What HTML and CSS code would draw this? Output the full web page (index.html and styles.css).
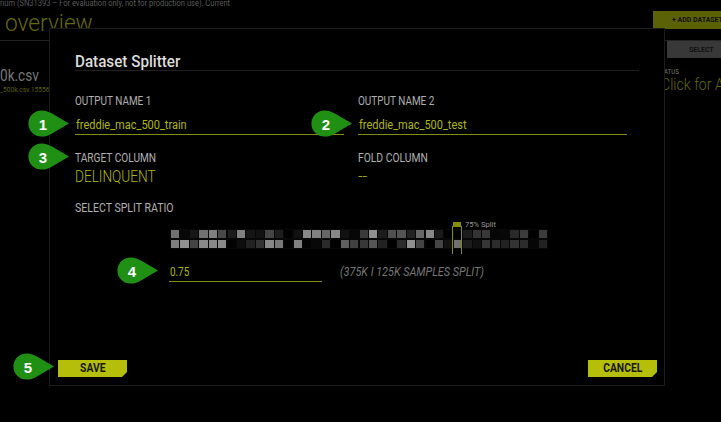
FILE: index.html
```html
<!DOCTYPE html>
<html lang="en">
<head>
<meta charset="utf-8">
<title>Dataset Splitter</title>
<link rel="stylesheet" href="styles.css">
</head>
<body>
<div class="page">
  <div class="notice"><span class="t">rium (SN31393 – For evaluation only, not for production use). Current</span></div>
  <header class="topbar">
    <h1><span class="t">overview</span></h1>
    <div class="add"><span class="t">+ ADD DATASET</span></div>
  </header>
  <main class="dataset">
    <div class="file">
      <div class="file-name"><span class="t">0k.csv</span></div>
      <div class="file-id"><span class="t">_500k.csv.15556</span></div>
    </div>
    <div class="side">
      <div class="select"><span class="t">SELECT</span></div>
      <div class="status-label"><span class="t">ATUS</span></div>
      <div class="status"><span class="t">Click for A</span></div>
    </div>
  </main>
</div>

<section class="modal">
  <h2><span class="t">Dataset Splitter</span></h2>
  <div class="fields">
    <div class="field">
      <div class="label"><span class="t l-name">OUTPUT NAME 1</span></div>
      <div class="input"><span class="t i-train">freddie_mac_500_train</span></div>
    </div>
    <div class="field">
      <div class="label"><span class="t l-name">OUTPUT NAME 2</span></div>
      <div class="input"><span class="t i-test">freddie_mac_500_test</span></div>
    </div>
    <div class="field">
      <div class="label"><span class="t l-target">TARGET COLUMN</span></div>
      <div class="value"><span class="t v-target">DELINQUENT</span></div>
    </div>
    <div class="field">
      <div class="label"><span class="t l-fold">FOLD COLUMN</span></div>
      <div class="value"><span class="t v-fold">--</span></div>
    </div>
  </div>
  <div class="label ratio"><span class="t l-ratio">SELECT SPLIT RATIO</span></div>
  <div class="strip">
    <div class="cells" id="cells"></div>
    <div class="handle"></div>
    <div class="split"><span class="t">75% Split</span></div>
  </div>
  <div class="amount">
    <div class="input number"><span class="t i-num">0.75</span></div>
    <div class="samples"><span class="t">(375K I 125K SAMPLES SPLIT)</span></div>
  </div>
  <footer>
    <button><span class="t b-save">SAVE</span></button>
    <button><span class="t b-cancel">CANCEL</span></button>
  </footer>
</section>

<div class="pin p1"><svg viewBox="0 0 42 27"><path d="M13.500 .4C18 .4 21 1.800 24 3.600L41 13.500L24 23.400C21 25.200 18 26.600 13.500 26.600A13.100 13.100 0 0 1 13.500 .4Z"/></svg><b>1</b></div>
<div class="pin p2"><svg viewBox="0 0 42 27"><path d="M13.500 .4C18 .4 21 1.800 24 3.600L41 13.500L24 23.400C21 25.200 18 26.600 13.500 26.600A13.100 13.100 0 0 1 13.500 .4Z"/></svg><b>2</b></div>
<div class="pin p3"><svg viewBox="0 0 42 27"><path d="M13.500 .4C18 .4 21 1.800 24 3.600L41 13.500L24 23.400C21 25.200 18 26.600 13.500 26.600A13.100 13.100 0 0 1 13.500 .4Z"/></svg><b>3</b></div>
<div class="pin p4"><svg viewBox="0 0 42 27"><path d="M13.500 .4C18 .4 21 1.800 24 3.600L41 13.500L24 23.400C21 25.200 18 26.600 13.500 26.600A13.100 13.100 0 0 1 13.500 .4Z"/></svg><b>4</b></div>
<div class="pin p5"><svg viewBox="0 0 42 27"><path d="M13.500 .4C18 .4 21 1.800 24 3.600L41 13.500L24 23.400C21 25.200 18 26.600 13.500 26.600A13.100 13.100 0 0 1 13.500 .4Z"/></svg><b>5</b></div>
<script src="cells.js"></script>
</body>
</html>
```
FILE: cells.js
```js
// Brightness of each sample cell, one hex pair per cell, two rows of 40.
const rows = [
  "70 08 16 70 80 48 1c 80 15 11 44 1e 00 11 88 80 66 88 11 06 3a 90 1c 50 55 22 66 88 1a 00 00 1c 33 38 06 08 2a 3c 00 3c",
  "80 90 44 88 88 8c 03 0d 22 33 88 77 00 80 02 08 2a 00 60 40 38 55 22 00 2c 90 44 00 44 11 70 1c 11 36 2c 22 33 2c 06 22"
];
const box = document.getElementById("cells");
rows.join(" ").split(" ").forEach(function (v) {
  const cell = document.createElement("i");
  cell.style.background = "#" + v + v + v;
  box.appendChild(cell);
});
```
FILE: styles.css
```css
* { box-sizing: border-box; }
html, body { margin: 0; height: 100%; overflow: hidden; background: #000; }
body { font-family: Roboto, "Liberation Sans", sans-serif; position: relative; }
h1, h2 { margin: 0; font-weight: 400; }
.t { display: inline-block; white-space: pre; transform-origin: 0 50%; }

.page { display: flow-root; height: 422px; overflow: hidden; }
.notice { height: 11px; font-size: 9px; line-height: 12px; margin-top: -3px; color: #5a5a5a; }
.notice .t { transform: scaleX(.835); }
.topbar { display: flex; justify-content: space-between; height: 33px; border-bottom: 1px solid #242424; padding-top: 3px; }
.topbar h1 { padding-left: 5px; font-size: 24px; line-height: 24px; font-weight: 300; color: #656a08; }
.topbar h1 .t { transform: scaleX(.945); }
.add { width: 68px; height: 18px; background: #5b6106; color: #111; font-size: 8px; font-weight: 700; line-height: 18px; padding-left: 19px; overflow: hidden; white-space: nowrap; }
.add .t { transform: scaleX(.87); }
.dataset { display: flex; justify-content: space-between; }
.file { padding-top: 25px; }
.file-name { font-size: 16px; line-height: 20px; color: #777; }
.file-name .t { transform: scaleX(.85); }
.file-id { font-size: 8px; line-height: 7px; color: #5c600a; }
.file-id .t { transform: scaleX(.83); }
.side { width: 60px; }
.select { margin-left: 6px; height: 17px; background: #383838; color: #111; font-size: 8px; font-weight: 700; line-height: 17px; padding-left: 22px; }
.select .t { transform: scaleX(.87); }
.status-label { margin-top: 9px; padding-left: 3px; font-size: 8px; line-height: 9px; color: #777; }
.status-label .t { transform: scaleX(.76); }
.status { font-size: 17px; line-height: 17px; font-weight: 300; color: #62670a; white-space: nowrap; }
.status .t { transform: scaleX(.83); }

.modal { position: absolute; left: 49px; top: 28px; width: 616px; height: 358px; background: #000; border: 1px solid #1c1c1c; padding: 20px 7px 8px 8px; display: flex; flex-direction: column; }
.modal h2 { margin: 0 18px 0 17px; height: 22px; border-bottom: 1px solid #202020; font-size: 16px; font-weight: 500; line-height: 25px; color: #dcdcdc; }
.modal h2 .t { transform: scaleX(.95); }
.fields { display: grid; grid-template-columns: 269px 269px; column-gap: 14px; grid-template-rows: 57px 50px; margin: 23px 0 0 17px; }
.label { font-size: 12px; line-height: 14px; height: 15px; color: #b0b0b0; }
.l-name { transform: scaleX(.83); }
.l-target { transform: scaleX(.845); }
.l-fold { transform: scaleX(.86); }
.l-ratio { transform: scaleX(.88); }
.input { margin-top: 8px; height: 18px; border-bottom: 1px solid #878d13; color: #b0b810; font-size: 12px; line-height: 17px; padding-left: 1px; }
.i-train, .i-test { transform: scaleX(.915); }
.value { font-size: 16px; line-height: 22px; font-weight: 300; color: #b0b810; }
.v-target { transform: scaleX(.85); }
.ratio { margin-left: 17px; }
.strip { position: relative; margin: 13px 0 0 112px; width: 378px; height: 21px; }
.cells { display: grid; grid-template-columns: repeat(40, 1fr); grid-template-rows: 1fr 1fr; gap: 2px 1.200px; width: 378px; height: 20px; padding: 1px; background: #070707; }
.handle { position: absolute; left: 282px; top: -3px; width: 10px; height: 28px; border: 1px solid #858a10; border-bottom: 0; }
.handle::before { content: ""; position: absolute; left: 0; top: -5px; width: 8px; height: 5px; background: #858a10; }
.split { position: absolute; left: 295px; top: -9px; font-size: 8px; line-height: 10px; color: #999; }
.split .t { transform: scaleX(.95); }
.amount { display: flex; margin: 13px 0 0 111px; }
.number { width: 153px; margin: 0; height: 19px; line-height: 19px; }
.i-num { transform: scaleX(.82); }
.samples { margin-left: 18px; font-size: 12px; line-height: 19px; font-style: italic; color: #777; }
.samples .t { transform: scaleX(.905); }
footer { margin-top: auto; display: flex; justify-content: space-between; }
button { width: 69px; height: 17px; border: 0; padding: 0; background: #b5bf0a; color: #17180a; font: 700 12px/17px Roboto, sans-serif; clip-path: polygon(0 0, 100% 0, 100% 12px, calc(100% - 5px) 100%, 0 100%); }
button .t { transform: scaleX(.86); transform-origin: 50% 50%; }

.pin { position: absolute; width: 42px; height: 27px; }
.pin svg { display: block; width: 42px; height: 27px; fill: #1f9014; }
.pin b { position: absolute; left: 0; top: 1px; width: 30px; text-align: center; font: 700 15px/27px "Liberation Sans", sans-serif; color: #fff; }
.p1 { left: 28px; top: 110px; }
.p2 { left: 311px; top: 110px; }
.p3 { left: 28px; top: 143px; }
.p4 { left: 117px; top: 257px; }
.p5 { left: 13px; top: 353px; }
```
